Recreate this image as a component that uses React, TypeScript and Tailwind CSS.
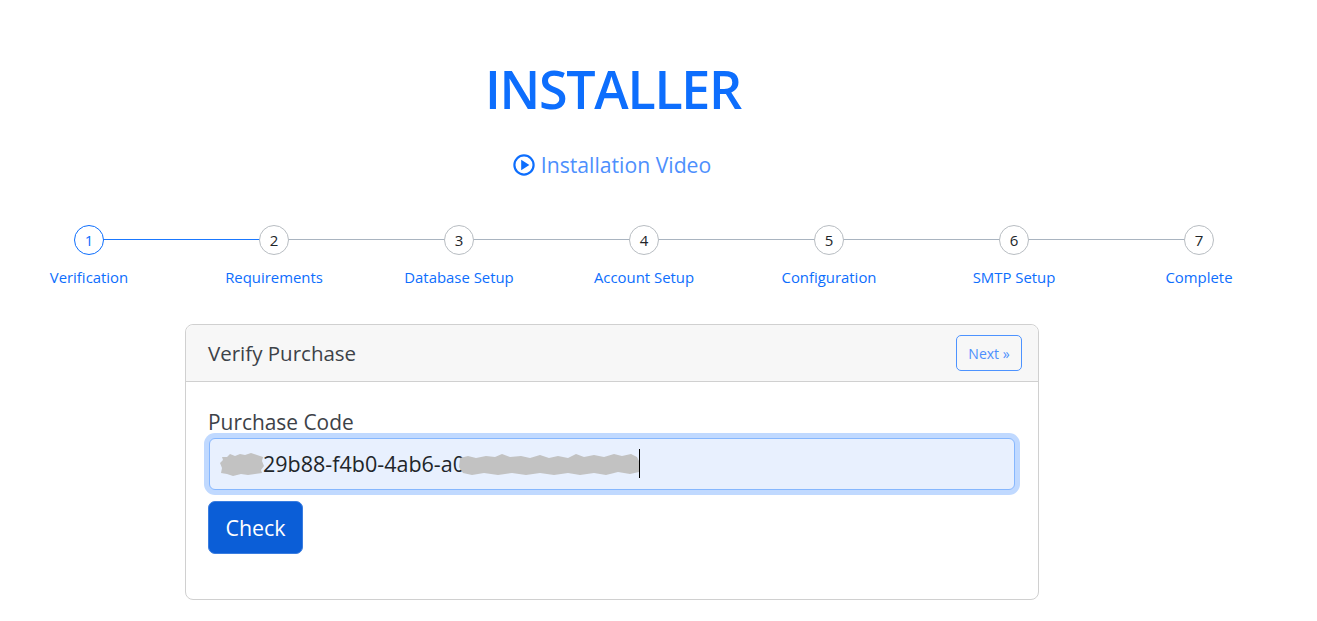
const font = '[font-family:"Open_Sans","Noto_Sans",sans-serif]';

const steps = [
  "Verification",
  "Requirements",
  "Database Setup",
  "Account Setup",
  "Configuration",
  "SMTP Setup",
  "Complete",
];

function Stepper() {
  return (
    <div className="ml-[-3.5px] mt-[45px] flex w-[1295px]">
      {steps.map((label, i) => (
        <div key={label} className="relative flex w-[185px] flex-col items-center">
          {i < steps.length - 1 && (
            <div
              className={
                i === 0
                  ? "absolute left-[92px] top-[14px] h-px w-[185px] bg-[#1a78ff]"
                  : "absolute left-[92px] top-[14px] h-px w-[185px] bg-[#a9b4c0]"
              }
            />
          )}
          <div
            className={
              i === 0
                ? "relative z-10 flex h-[30px] w-[30px] items-center justify-center rounded-full border border-[#0d6efd] bg-white text-[15px] text-[#0d6efd]"
                : "relative z-10 flex h-[30px] w-[30px] items-center justify-center rounded-full border border-[#b8bdc2] bg-white text-[15px] text-[#212529]"
            }
          >
            {i + 1}
          </div>
          <div className="mt-[12px] text-[14.9px] leading-[20px] text-[#0d6efd]">{label}</div>
        </div>
      ))}
    </div>
  );
}

function PlayIcon() {
  return (
    <svg width="22" height="22" viewBox="0 0 22 22" className="mr-[6px]">
      <circle cx="11" cy="11" r="9.6" fill="none" stroke="#0d6efd" strokeWidth="2.2" />
      <path d="M8.2 5.8 L16.4 11 L8.2 16.2 Z" fill="#0d6efd" />
    </svg>
  );
}

function Smudges() {
  return (
    <svg width="440" height="32" viewBox="0 0 440 32" className="absolute left-[10px] top-[11px] blur-[0.6px]">
      <path
        d="M2 14 L5 11 L4 8 L9 8 L12 5 L17 7 L22 5 L27 6 L33 4 L39 6 L45 8 L44 12 L46 17 L43 21 L44 24 L37 25 L30 26 L23 25 L15 27 L9 25 L3 24 L4 19 Z"
        fill="#c2c2c2"
      />
      <path
        d="M242 9 L250 7 L258 9 L268 7 L277 8 L284 5 L292 8 L303 7 L312 9 L322 6 L331 9 L340 7 L350 9 L358 5 L366 8 L376 6 L386 8 L396 5 L404 7 L413 5 L419 8 L422 14 L421 23 L412 25 L400 23 L388 26 L376 24 L362 26 L350 24 L336 26 L322 24 L308 26 L294 24 L280 26 L266 24 L254 26 L245 24 L241 18 Z"
        fill="#c2c2c2"
      />
    </svg>
  );
}

function VerifyCard() {
  return (
    <div className="ml-[185px] mt-[37px] h-[276px] w-[854px] rounded-[8px] border border-[#d0d0d0] bg-white">
      <div className="flex h-[57px] items-center justify-between rounded-t-[8px] border-b border-[#d0d0d0] bg-[#f7f7f7] pl-[22px] pr-[16px]">
        <h5 className="text-[20.5px] text-[#3d4248]">Verify Purchase</h5>
        <button className="flex h-[36px] w-[66px] items-center justify-center rounded-[5px] border border-[#4d93ff] text-[14px] text-[#4d8ffd]">
          Next »
        </button>
      </div>
      <div className="px-[22px] pt-[27px]">
        <label className="block text-[20.9px] leading-[26px] text-[#3d4248]">Purchase Code</label>
        <div className="relative mt-[3px]">
          <div className="ml-px h-[52px] w-[806px] rounded-[6px] border border-[#86b7fe] bg-[#e8f0fe] pl-[53px] text-[21.5px] leading-[50px] text-[#212529] shadow-[0_0_0_5px_#c0d9ff]">
            29b88-f4b0-4ab6-a0
          </div>
          <Smudges />
          <div className="absolute left-[431px] top-[11px] h-[29px] w-px bg-black" />
        </div>
        <button className="mt-[11px] h-[53px] w-[95px] rounded-[7px] border border-[#3a7de0] bg-[#0b5ed7] pt-px text-[21.4px] text-white">
          Check
        </button>
      </div>
    </div>
  );
}

export default function App() {
  return (
    <div className={`${font} min-h-screen overflow-hidden bg-white`}>
      <h1 className="ml-[-47px] w-[1320px] pt-[55px] text-center text-[52px] font-semibold leading-[68px] tracking-[-1.3px] text-[#0d6efd]">
        INSTALLER
      </h1>
      <div className="mt-[27px] flex h-[30px] items-center justify-center pr-[93px] text-[21.2px] text-[#4d8ffd]">
        <PlayIcon />
        Installation Video
      </div>
      <Stepper />
      <VerifyCard />
    </div>
  );
}
